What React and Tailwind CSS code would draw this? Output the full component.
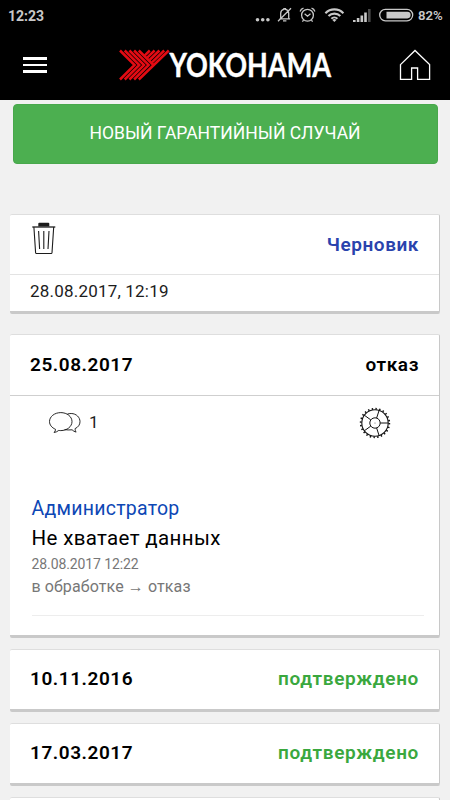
import React from 'react';

const claims = [
    { date: '10.11.2016', status: 'подтверждено' },
    { date: '17.03.2017', status: 'подтверждено' },
];

const cardClass = "shrink-0 bg-white rounded-[2px] border-t border-r border-b-[3px] border-t-[#dedede] border-r-[#c8c8c8] border-b-[#c9c9c9]";
const rowClass = "flex items-center justify-between px-5 text-[19px] font-semibold text-black";

function StatusIcons() {
    return (
        <svg className="w-[128px] h-[30px]" viewBox="250 0 128 30" fill="none" stroke="#c8c8c8" strokeWidth="1.3">
            {/* more */}
            <g fill="#c8c8c8" stroke="none">
                <circle cx="256.5" cy="19.7" r="1.8" />
                <circle cx="261.7" cy="19.7" r="1.8" />
                <circle cx="266.9" cy="19.7" r="1.8" />
            </g>
            {/* muted bell */}
            <path d="M278.500 18.8h10.6M279.7 18.5v-5.3a4 4 0 0 1 3.2-3.8V8.6h1.6v.8a4 4 0 0 1 3.2 3.8v5.6M282 20.9h3.4M277 21.3L290 8.2" />
            {/* alarm */}
            <circle cx="306.5" cy="15.2" r="5.9" />
            <path d="M303.6 13.8l2.9 2.4 3-2.4M299.1 11.5a5 5 0 0 1 3.4-3.3M313.9 11.5a5 5 0 0 0-3.4-3.3M302.6 20.2l-1.2 1.5M310.4 20.2l1.2 1.5" />
            {/* wifi */}
            <g strokeWidth="2.1">
                <path d="M324.4 13.2a12.6 12.6 0 0 1 18 0" />
                <path d="M327.5 16.1a8.3 8.3 0 0 1 11.8 0" />
                <path d="M330.4 18.7a4.3 4.3 0 0 1 6 0" />
            </g>
            <path d="M333.4 22l-2-2.1a3 3 0 0 1 4 0z" fill="#c8c8c8" stroke="none" />
            {/* signal */}
            <g fill="#c8c8c8" stroke="none">
                <rect x="352" y="20" width="2.6" height="2" />
                <rect x="355.8" y="18" width="2.6" height="4" />
                <rect x="359.5" y="15.5" width="2.6" height="6.5" />
                <rect x="363.2" y="12.5" width="2.6" height="9.5" />
                <rect x="367" y="9" width="2.6" height="13" fill="#4a4a4a" />
            </g>
        </svg>
    );
}

function Battery() {
    return (
        <svg className="w-[35px] h-[30px]" viewBox="378.5 0 35 30" fill="none">
            <rect x="379.2" y="9.4" width="33" height="11.4" rx="5.7" stroke="#c8c8c8" strokeWidth="1.3" />
            <path d="M386 11.8h20.8a3.3 3.3 0 0 1 0 6.6H386z" fill="#c8c8c8" />
        </svg>
    );
}

function StatusBar() {
    return (
        <div className="flex h-[30px] items-center justify-between pl-2 pr-[8px] text-[#c8c8c8]">
            <span className="pt-0.5 text-[14px] font-bold leading-[30px]">12:23</span>
            <div className="flex items-center">
                <StatusIcons />
                <Battery />
                <span className="ml-[4px] w-[24px] whitespace-nowrap pt-px text-[13.2px] font-semibold">82%</span>
            </div>
        </div>
    );
}

function Logo() {
    return (
        <svg className="w-[214px] h-[32px] overflow-visible" viewBox="118 49 214 32">
            <g stroke="#e30b13" strokeWidth="2.5" fill="none">
                <path d="M120 50.5l14.6 14.5L120 79.5M124.7 50.5l14.6 14.5L124.7 79.5M129.4 50.5l14.6 14.5L129.4 79.5M134.1 50.5l14.6 14.5L134.1 79.5M138.8 50.5l14.6 14.5" />
                <path d="M138.8 79.5L168.8 50.5M164.200 50.5L152 62.3M159.400 50.5L149.6 60M154.600 50.5L147.2 57.7M149.800 50.5L144.8 55.3" />
            </g>
            <text x="169.5" y="76.8" textLength="161.5" lengthAdjust="spacingAndGlyphs" fill="#fff" stroke="#fff" strokeWidth="0.4" fontSize="31.8" fontWeight="700" fontFamily="Lato, sans-serif">YOKOHAMA</text>
        </svg>
    );
}

function Header() {
    return (
        <div className="flex h-[70px] items-center pl-[23px] pr-[19px]">
            <div className="flex w-6 flex-col gap-1">
                <div className="h-[2.7px] bg-white"></div>
                <div className="h-[2.7px] bg-white"></div>
                <div className="h-[2.7px] bg-white"></div>
            </div>
            <div className="ml-[71px]">
                <Logo />
            </div>
            <svg className="ml-auto w-[32px] h-[32px]" viewBox="399 49 32 32" fill="none" stroke="#fff" strokeWidth="1.3">
                <path d="M400.5 64.6L415 50.5l14.6 14.1V79.3h-12V68h-6v11.3h-11.1z" />
            </svg>
        </div>
    );
}

function TrashIcon() {
    return (
        <svg className="w-[24px] h-[32px]" viewBox="0 0 24 32" fill="none" stroke="#1c1c1c" strokeWidth="1.1">
            <path d="M6.3 4.6V1.8a1 1 0 0 1 1-1h9a1 1 0 0 1 1 1v2.8z" fill="#1c1c1c" stroke="none" />
            <path d="M.3 5h23" strokeWidth="1.3" />
            <path d="M1.9 5l1.7 25.7q.1 .8.9.8h14.6q.8 0 .9-.8L21.7 5" />
            <path d="M6.6 9l1 18M11.8 9v18M17 9l-1 18" />
        </svg>
    );
}

function ChatIcon() {
    return (
        <svg className="w-[32px] h-[22px]" viewBox="0 0 32 22" fill="none" stroke="#111" strokeWidth="0.9">
            <path d="M6.5 17.3C3 15.8.5 13 .5 9.6.5 4.6 5.5.6 11.8.6S23 4.6 23 9.6s-5 9-11.2 9q-1 0-2-.2-2.3 1.8-4.7 2.1 1.5-1.5 1.4-3.2z" />
            <path d="M18.3 2.2Q20 1.4 22.2 1.5C27.3 1.6 31 5.3 31 9.7c0 3-1.9 5.6-4.9 6.9 0 1.7.5 2.7 1 3.5-1.6-.4-3-1.2-4-2.3-2.6.3-5.2.2-7.5-.2" />
        </svg>
    );
}

function GearIcon() {
    return (
        <svg className="w-8 h-8" viewBox="-16 -16 32 32" fill="none" stroke="#111">
            <circle r="13.2" strokeWidth="1.1" />
            <circle r="14.3" strokeWidth="1.8" strokeDasharray="1.4 2.344" />
            <circle r="5.2" strokeWidth="1" />
            <path d="M5.2 0H13.2M1.6-4.9L4.1-12.6M-4.2-3.1L-10.7-7.8M-4.2 3.1L-10.7 7.8M1.6 4.9L4.1 12.6" strokeWidth="1" />
            <circle r=".6" fill="#666" stroke="none" />
        </svg>
    );
}

function App() {
    return (
        <div className="flex h-[800px] w-[450px] flex-col overflow-hidden bg-[#f1f1f1] font-['Roboto','Noto_Sans',sans-serif]">
            <div className="h-[100px] shrink-0 bg-black">
                <StatusBar />
                <Header />
            </div>

            <button className="mx-[12.5px] mt-1 h-[60px] shrink-0 rounded-[4px] border border-[#48a84c] bg-[#4caf50] pb-[2px] text-[17.5px] text-white">
                НОВЫЙ ГАРАНТИЙНЫЙ СЛУЧАЙ
            </button>

            <div className="mt-[50px] flex flex-col px-[10px]">
                {/* Draft */}
                <div className={`${cardClass} h-[100px]`}>
                    <div className="flex h-[60px] justify-between border-b border-[#e3e3e3] pl-[22px] pr-5">
                        <div className="pt-[7px]">
                            <TrashIcon />
                        </div>
                        <span className="text-[19px] font-semibold leading-[59px] tracking-[0.55px] text-[#2a43ad]">Черновик</span>
                    </div>
                    <p className="pl-5 text-[17px] leading-[33px] tracking-[0.2px] text-[#1c1c1c]">28.08.2017, 12:19</p>
                </div>

                {/* Refused claim */}
                <div className={`${cardClass} mt-5 h-[304px]`}>
                    <div className={`${rowClass} h-[61px] border-b-[1.5px] border-[#cfcfcf]`}>
                        <span className="tracking-[0.55px]">25.08.2017</span>
                        <span className="tracking-[0.6px]">отказ</span>
                    </div>
                    <div className="flex h-[54px] items-center justify-between pl-[39px] pr-[48px]">
                        <div className="flex items-center gap-2">
                            <ChatIcon />
                            <span className="text-[17px] text-[#1c1c1c]">1</span>
                        </div>
                        <GearIcon />
                    </div>
                    <div className="ml-[21.5px] mr-[15px] mt-[45px] h-[121px] border-b border-[#ededed]">
                        <p className="text-[19.5px] leading-[28px] tracking-[0.25px] text-[#0d47b5]">Администратор</p>
                        <p className="text-[20.5px] leading-[31px] tracking-[0.35px] text-black">Не хватает данных</p>
                        <p className="text-[14px] leading-[21px] tracking-[-0.1px] text-[#777]">28.08.2017 12:22</p>
                        <p className="text-[16px] leading-[23px] tracking-[0.1px] text-[#777]">в обработке → отказ</p>
                    </div>
                </div>

                {claims.map((claim, i) => (
                    <div key={i} className={`${cardClass} mt-[11px] h-[63px]`}>
                        <div className={`${rowClass} h-[59px]`}>
                            <span className="tracking-[0.55px]">{claim.date}</span>
                            <span className="tracking-[0.65px] text-[#3aa83e]">{claim.status}</span>
                        </div>
                    </div>
                ))}
                <div className={`${cardClass} mt-[11px] h-[63px]`}></div>
            </div>
        </div>
    );
}

export default App;
